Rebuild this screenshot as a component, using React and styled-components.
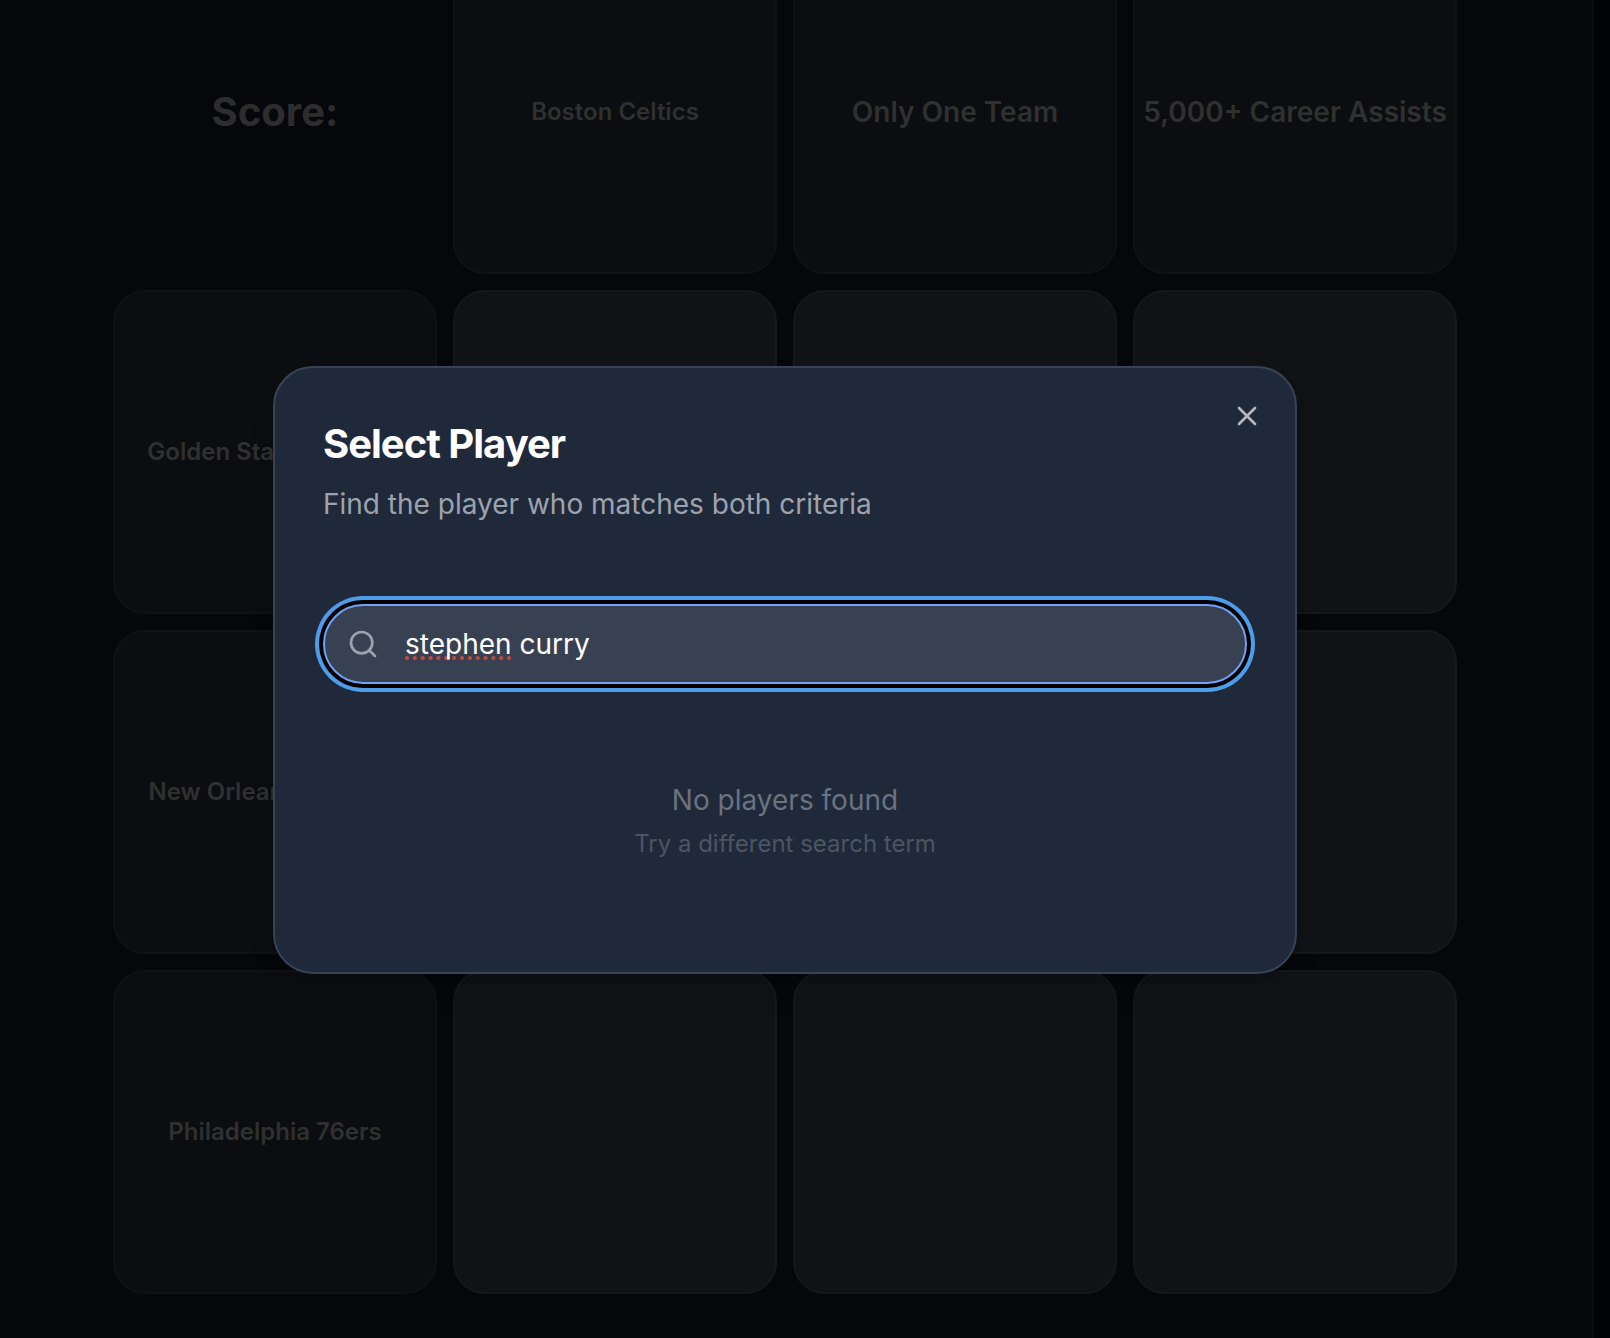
import React, { useState } from 'react';
import styled, { createGlobalStyle } from 'styled-components';
import { Search, X } from 'lucide-react';

const GlobalStyle = createGlobalStyle`
  *, *::before, *::after { box-sizing: border-box; }
  body {
    margin: 0;
    background: #020307;
    font-family: Inter, "Liberation Sans", sans-serif;
    overflow: hidden;
  }
`;

const Page = styled.div`
  position: relative;
  width: 100%;
  height: 100vh;
  overflow: hidden;
`;

const Board = styled.main`
  display: flex;
  justify-content: flex-start;
  width: 1594px;
  height: 1438px;
  margin-top: -50px;
  padding-left: 113px;
  border-right: 2px solid #0b0c0f;
  background: #06070b;
`;

const Grid = styled.div`
  display: grid;
  grid-template-columns: repeat(4, 324px);
  grid-auto-rows: 324px;
  gap: 16px;
`;

const Cell = styled.div`
  display: flex;
  align-items: center;
  justify-content: center;
  border: 2px solid #16171a;
  border-radius: 32px;
  background: #111215;
`;

const LabelCell = styled(Cell)`
  padding-bottom: ${p => (p.$large ? 0 : 2)}px;
  border-color: #101114;
  background: #0b0d10;
  color: #303030;
  font-size: ${p => (p.$large ? 28 : 24)}px;
  font-weight: 600;
  white-space: nowrap;
`;

const ScoreCell = styled.div`
  display: flex;
  align-items: center;
  justify-content: center;
  color: #2d2d2d;
  font-size: 40px;
  line-height: 56px;
  font-weight: 700;
`;

const Overlay = styled.div`
  position: absolute;
  inset: 0;
  padding: 366px 0 0 273px;
`;

const Dialog = styled.section`
  position: relative;
  width: 1024px;
  height: 608px;
  padding: 48px;
  border: 2px solid #374356;
  border-radius: 40px;
  background: #202939;
  box-shadow: 0 20px 30px -6px rgba(0, 0, 0, 0.1), 0 8px 12px -8px rgba(0, 0, 0, 0.1);
`;

const Header = styled.header`
  display: flex;
  flex-direction: column;
  gap: 12px;
  margin-bottom: 80px;
`;

const Title = styled.h2`
  margin: 0;
  color: #fff;
  font-size: 40px;
  line-height: 56px;
  font-weight: 700;
  letter-spacing: -0.025em;
`;

const Subtitle = styled.p`
  margin: 0;
  color: #9ca3af;
  font-size: 28px;
  line-height: 40px;
`;

const CloseButton = styled.button`
  position: absolute;
  top: 32px;
  right: 32px;
  display: flex;
  padding: 0;
  border: 0;
  background: none;
  color: #b4b7be;
`;

const Field = styled.div`
  position: relative;
  display: flex;
  align-items: center;
  height: 80px;
  padding: 0 22px;
  border: 2px solid #6fa1f8;
  border-radius: 40px;
  background: #384152;
  box-shadow: 0 0 0 4px #000, 0 0 0 8px #4d9dea;
  color: #9ca3af;
`;

const Input = styled.input`
  position: relative;
  flex: 1;
  min-width: 0;
  height: 40px;
  margin-left: 26px;
  padding: 0;
  border: 0;
  outline: 0;
  background: transparent;
  color: #fff;
  font: 400 28px/40px Inter, "Liberation Sans", sans-serif;
`;

const SpellingMark = styled.span`
  position: absolute;
  top: 50px;
  left: 79.8px;
  width: 106.2px;
  height: 4px;
  background: radial-gradient(circle at 2px 2px, #c2473f 1.6px, transparent 2.3px) 0 0 / 7.86px 4px repeat-x;
`;

const Empty = styled.div`
  margin-top: 32px;
  padding: 64px 0;
  text-align: center;
`;

const EmptyTitle = styled.p`
  margin: 0;
  color: #6b7280;
  font-size: 28px;
  line-height: 40px;
`;

const EmptyHint = styled.p`
  margin: 8px 0 0;
  color: #4b5563;
  font-size: 24px;
  line-height: 32px;
`;

const columns = [
  { label: 'Boston Celtics' },
  { label: 'Only One Team', large: true },
  { label: '5,000+ Career Assists', large: true },
];
const rows = ['Golden State Warriors', 'New Orleans Pelicans', 'Philadelphia 76ers'];

export default function App() {
  const [query, setQuery] = useState('stephen curry');

  return (
    <Page>
      <GlobalStyle />
      <Board>
        <Grid>
          <ScoreCell>Score:</ScoreCell>
          {columns.map(c => (
            <LabelCell key={c.label} $large={c.large}>{c.label}</LabelCell>
          ))}
          {rows.map(row => (
            <React.Fragment key={row}>
              <LabelCell>{row}</LabelCell>
              {columns.map(c => <Cell key={c.label} />)}
            </React.Fragment>
          ))}
        </Grid>
      </Board>
      <Overlay>
        <Dialog role="dialog" aria-label="Select Player">
          <Header>
            <Title>Select Player</Title>
            <Subtitle>Find the player who matches both criteria</Subtitle>
          </Header>
          <CloseButton aria-label="Close"><X size={32} strokeWidth={2} /></CloseButton>
          <Field>
            <Search size={32} strokeWidth={2} />
            {query.startsWith('stephen') && <SpellingMark />}
            <Input value={query} onChange={e => setQuery(e.target.value)} spellCheck={false} />
          </Field>
          <Empty>
            <EmptyTitle>No players found</EmptyTitle>
            <EmptyHint>Try a different search term</EmptyHint>
          </Empty>
        </Dialog>
      </Overlay>
    </Page>
  );
}
